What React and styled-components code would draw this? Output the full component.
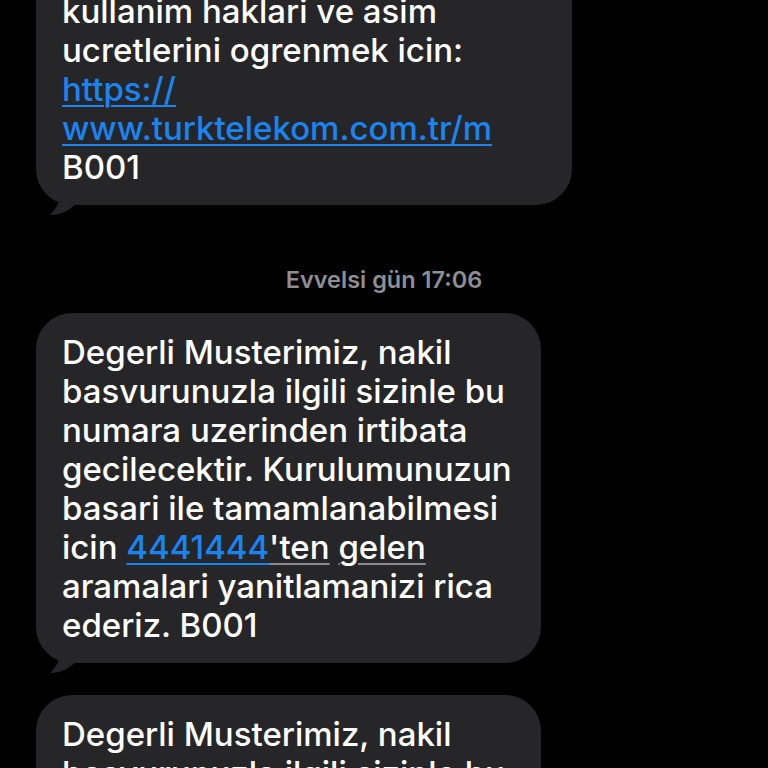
import React from "react";
import styled, { createGlobalStyle } from "styled-components";

const Global = createGlobalStyle`
  html, body { margin: 0; padding: 0; background: #000; }
  body { width: 768px; height: 768px; overflow: hidden; font-family: Inter, "Noto Sans", sans-serif; }
`;

const Screen = styled.div`
  width: 768px;
  height: 768px;
  overflow: hidden;
  background: #000;
`;

const Thread = styled.div`
  display: flex;
  flex-direction: column;
  align-items: flex-start;
  margin-top: -67px;
`;

const Bubble = styled.div`
  position: relative;
  box-sizing: border-box;
  width: ${(p) => p.$w}px;
  background: #262628;
  border-radius: 36px;
  padding: 20px 20px 18px 26px;
  color: #fff;
  font-size: 33px;
  font-weight: 500;
  line-height: 39px;
  margin-top: ${(p) => p.$mt ?? 0}px;
  margin-left: 36px;
`;

const Line = styled.div`
  white-space: nowrap;
`;

const Link = styled.span`
  color: #1a84f2;
  text-decoration: underline;
  text-decoration-thickness: 2px;
  text-underline-offset: 4px;
`;

const Soft = styled.span`
  text-decoration: underline;
  text-decoration-color: #8a8a8e;
  text-decoration-thickness: 2px;
  text-underline-offset: 4px;
`;

const Tail = styled.svg`
  position: absolute;
  left: 12px;
  bottom: -12px;
  width: 40px;
  height: 30px;
`;

const Stamp = styled.div`
  align-self: stretch;
  text-align: center;
  color: #8e8e93;
  font-size: 23.5px;
  font-weight: 600;
  margin-top: 60px;
`;

const TailShape = () => (
  <Tail viewBox="0 0 40 30">
    <path d="M14 0 C14 10 10 20 2 28 C14 28 24 22 30 14 L30 0 Z" fill="#262628" />
  </Tail>
);

export default function App() {
  return (
    <Screen>
      <Global />
      <Thread>
        <Bubble $w={536}>
          <Line>mobil hatlarinizin</Line>
          <Line>kullanim haklari ve asim</Line>
          <Line>ucretlerini ogrenmek icin:</Line>
          <Line><Link>https://</Link></Line>
          <Line><Link>www.turktelekom.com.tr/m</Link></Line>
          <Line>B001</Line>
          <TailShape />
        </Bubble>
        <Stamp>Evvelsi gün 17:06</Stamp>
        <Bubble $w={505} $mt={19}>
          <Line>Degerli Musterimiz, nakil</Line>
          <Line>basvurunuzla ilgili sizinle bu</Line>
          <Line>numara uzerinden irtibata</Line>
          <Line>gecilecektir. Kurulumunuzun</Line>
          <Line>basari ile tamamlanabilmesi</Line>
          <Line>icin <Link>4441444</Link><Soft>'ten</Soft> <Soft>gelen</Soft></Line>
          <Line>aramalari yanitlamanizi rica</Line>
          <Line>ederiz. B001</Line>
          <TailShape />
        </Bubble>
        <Bubble $w={505} $mt={32}>
          <Line>Degerli Musterimiz, nakil</Line>
          <Line>basvurunuzla ilgili sizinle bu</Line>
          <Line>numara uzerinden irtibata</Line>
        </Bubble>
      </Thread>
    </Screen>
  );
}
